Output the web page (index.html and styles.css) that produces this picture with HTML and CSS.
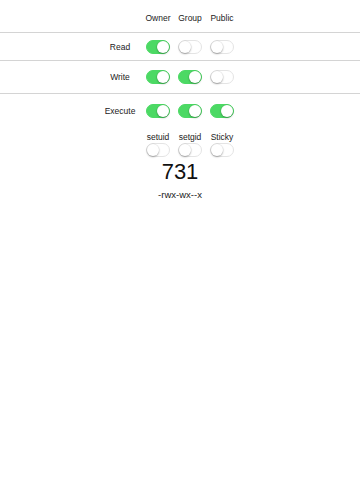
FILE: index.html
```html
<!DOCTYPE html>
<html lang="en">
  <head>
    <meta charset="UTF-8" />
    <meta name="viewport" content="width=device-width, initial-scale=1.0" />
    <title>chmod</title>
    <link rel="stylesheet" href="styles.css">
  </head>
  <body>
    <div class="perm">
      <div class="row head">
        <span class="label"></span>
        <div class="cells">
          <span class="col">Owner</span>
          <span class="col">Group</span>
          <span class="col">Public</span>
        </div>
      </div>
      <div class="row read">
        <span class="label">Read</span>
        <div class="cells">
          <span class="switch on"></span>
          <span class="switch"></span>
          <span class="switch"></span>
        </div>
      </div>
      <div class="row write">
        <span class="label">Write</span>
        <div class="cells">
          <span class="switch on"></span>
          <span class="switch on"></span>
          <span class="switch"></span>
        </div>
      </div>
      <div class="row exec">
        <span class="label">Execute</span>
        <div class="cells">
          <span class="switch on"></span>
          <span class="switch on"></span>
          <span class="switch on"></span>
        </div>
      </div>
    </div>
    <div class="special">
      <div class="flag">setuid<span class="switch"></span></div>
      <div class="flag">setgid<span class="switch"></span></div>
      <div class="flag">Sticky<span class="switch"></span></div>
    </div>
    <div class="octal">731</div>
    <div class="symbolic">-rwx-wx--x</div>
  </body>
</html>
```
FILE: styles.css
```css
body {
  margin: 0;
  background: #fff;
  color: #222;
  font-family: "Liberation Sans", Arial, sans-serif;
}
.row {
  display: flex;
  align-items: center;
  border-bottom: 1px solid #d4d4d4;
}
.head {
  height: 28px;
  padding-top: 4px;
}
.read {
  height: 27px;
}
.write {
  height: 32px;
}
.exec {
  height: 34px;
  border-bottom: none;
}
.label {
  width: 40px;
  margin-left: 100px;
  text-align: center;
  font-size: 8.5px;
}
.cells {
  display: flex;
  gap: 8px;
  margin-left: 6px;
}
.col {
  width: 24px;
  display: flex;
  justify-content: center;
  white-space: nowrap;
  font-size: 8.5px;
}
/* switch like iOS */
.switch {
  display: flex;
  align-items: center;
  width: 24px;
  height: 14px;
  box-sizing: border-box;
  border: 1px solid #e4e4e4;
  border-radius: 7px;
  background: #fff;
}
.switch::after {
  content: "";
  width: 12px;
  height: 12px;
  border-radius: 50%;
  background: #fff;
  box-shadow: 0 1px 2px rgba(0, 0, 0, 0.3), 0 0 0 0.5px rgba(0, 0, 0, 0.08);
}
.switch.on {
  background: #4cd964;
  border-color: #4cd964;
  justify-content: flex-end;
}
.special {
  display: flex;
  gap: 8px;
  padding-left: 146px;
  margin-top: 4px;
}
.flag {
  width: 24px;
  display: flex;
  flex-direction: column;
  align-items: center;
  gap: 1px;
  font-size: 8.5px;
  line-height: 10px;
  white-space: nowrap;
}
.octal {
  margin-top: 3px;
  text-align: center;
  font-size: 22px;
  line-height: 24px;
  color: #111;
}
.symbolic {
  margin-top: 5px;
  text-align: center;
  font-size: 9.5px;
  line-height: 12px;
}
```
